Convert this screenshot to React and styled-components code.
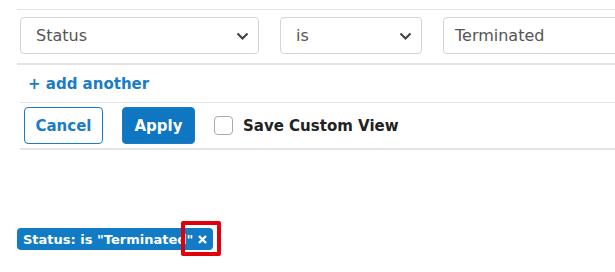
import React from 'react';
import styled, { createGlobalStyle } from 'styled-components';

const Global = createGlobalStyle`
  body {
    margin: 0;
    background: #fff;
    font-family: "DejaVu Sans", "Open Sans", sans-serif;
    overflow: hidden;
  }
`;

const Page = styled.div`
  width: 615px;
  height: 272px;
  padding-left: 17px;
  padding-top: 9px;
  box-sizing: border-box;
`;

const Panel = styled.div`
  border-top: 1px solid #e4e4e4;
`;

const FilterRow = styled.div`
  display: flex;
  gap: 21px;
  padding: 7px 0 9px 3px;
  border-bottom: 2px solid #e4e4e4;
`;

const SelectBox = styled.div`
  position: relative;
  width: ${p => p.w}px;
  flex: 0 0 auto;
  height: 37px;
  box-sizing: border-box;
  border: 1px solid #d4d4d4;
  border-radius: 4px;
  display: flex;
  align-items: center;
  padding-left: ${p => p.pl || 15}px;
  font-size: 16px;
  color: #555;
`;

const Chevron = styled.svg`
  position: absolute;
  right: 9px;
  top: 14px;
`;

const AddRow = styled.div`
  margin-left: 3px;
  height: 38px;
  display: flex;
  align-items: center;
  padding-left: 8px;
  padding-top: 1px;
  box-sizing: border-box;
  border-bottom: 1px solid #e4e4e4;
  color: #1a7cc7;
  font-weight: 700;
  font-size: 15px;
`;

const ActionRow = styled.div`
  margin-left: 3px;
  height: 45px;
  display: flex;
  align-items: center;
  gap: 19px;
  padding-left: 4px;
  border-bottom: 2px solid #e4e4e4;
`;

const Button = styled.button`
  width: ${p => p.w}px;
  height: 37px;
  box-sizing: border-box;
  padding: 0;
  border-radius: 4px;
  font-family: inherit;
  font-weight: 700;
  font-size: 15px;
  border: 1px solid #1a7cc7;
  background: ${p => (p.primary ? '#0f76c2' : '#fff')};
  color: ${p => (p.primary ? '#fff' : '#1a7cc7')};
`;

const CheckLabel = styled.label`
  display: flex;
  align-items: center;
  gap: 10px;
  font-weight: 700;
  font-size: 15px;
  color: #222;
`;

const Box = styled.span`
  width: 19px;
  height: 19px;
  box-sizing: border-box;
  border: 1px solid #aaa;
  border-radius: 4px;
  background: #fff;
`;

const BadgeArea = styled.div`
  position: relative;
  margin-top: 78px;
  display: inline-block;
`;

const Badge = styled.span`
  display: inline-flex;
  align-items: center;
  gap: 5px;
  height: 22px;
  padding: 0 6px 0 6px;
  border-radius: 4px;
  background: #127bc6;
  color: #fff;
  font-weight: 700;
  font-size: 13px;
`;

const Highlight = styled.span`
  position: absolute;
  left: 164px;
  top: -7px;
  width: 40px;
  height: 35px;
  box-sizing: border-box;
  border: 4px solid #e0000b;
  border-radius: 2px;
`;

const chevron = (
  <Chevron width="13" height="9" viewBox="0 0 13 9">
    <path d="M1.5 1.5 L6.5 6.5 L11.5 1.5" fill="none" stroke="#444" strokeWidth="2.2" />
  </Chevron>
);

export default function App() {
  return (
    <Page>
      <Global />
      <Panel>
        <FilterRow>
          <SelectBox w={239}>
            Status
            {chevron}
          </SelectBox>
          <SelectBox w={142}>
            is
            {chevron}
          </SelectBox>
          <SelectBox w={200} pl={11}>Terminated</SelectBox>
        </FilterRow>
        <AddRow>+ add another</AddRow>
        <ActionRow>
          <Button w={79}>Cancel</Button>
          <Button w={73} primary>Apply</Button>
          <CheckLabel>
            <Box />
            Save Custom View
          </CheckLabel>
        </ActionRow>
      </Panel>
      <BadgeArea>
        <Badge>
          Status: is "Terminated"
          <svg width="9" height="9" viewBox="0 0 9 9">
            <path d="M1 1 L8 8 M8 1 L1 8" stroke="#fff" strokeWidth="2.4" />
          </svg>
        </Badge>
        <Highlight />
      </BadgeArea>
    </Page>
  );
}
